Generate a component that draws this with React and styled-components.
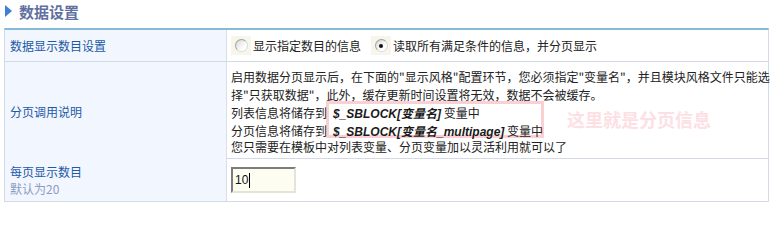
import React from "react";
import styled, { createGlobalStyle } from "styled-components";

const GlobalStyle = createGlobalStyle`
  body {
    margin: 0;
    background: #fff;
    font-family: "Noto Sans CJK SC", "Liberation Sans", sans-serif;
    font-size: 12px;
    color: #222;
  }
`;

const Page = styled.div`
  width: 775px;
  padding: 0 6px 0 4px;
  box-sizing: border-box;
`;

const Title = styled.div`
  display: flex;
  align-items: center;
  height: 22px;
  padding-left: 1px;
  gap: 7px;
  font-size: 15px;
  font-weight: bold;
  color: #6170a0;
  margin-bottom: 6px;
`;

const Arrow = styled.span`
  width: 0;
  height: 0;
  border-top: 6px solid transparent;
  border-bottom: 6px solid transparent;
  border-left: 7px solid #3f7fd6;
`;

const Table = styled.div`
  border-top: 2px solid #86bad9;
  border-left: 1px solid #d4d9e6;
  border-right: 1px solid #d4d9e6;
`;

const Row = styled.div`
  display: grid;
  grid-template-columns: 222px 1fr;
  border-bottom: 1px solid #d4d9e6;
  height: ${(p) => p.$h}px;
`;

const Label = styled.div`
  background: #f2f6fe;
  border-right: 1px solid #d9dee9;
  padding-left: 5px;
  display: flex;
  flex-direction: column;
  justify-content: center;
  color: #1c5aa8;
  line-height: 17px;
`;

const Hint = styled.span`
  color: #8d9cc2;
`;

const Cell = styled.div`
  position: relative;
  padding: ${(p) => p.$pad || "0 4px"};
  display: flex;
  flex-direction: column;
  justify-content: ${(p) => (p.$top ? "flex-start" : "center")};
`;

const RadioGroup = styled.div`
  display: flex;
  align-items: center;
`;

const RadioItem = styled.label`
  display: flex;
  align-items: center;
  margin-right: 10px;
`;

const RadioBox = styled.span`
  display: flex;
  align-items: center;
  justify-content: center;
  width: 20px;
  height: 19px;
  background: #f6f6ea;
  margin-right: 2px;
`;

const Radio = styled.span`
  width: 11px;
  height: 11px;
  border-radius: 50%;
  border: 1px solid #a2a2a2;
  border-right-color: #d8d8d8;
  border-bottom-color: #dadada;
  background: linear-gradient(135deg, #d8d8d8, #fff 70%);
  display: flex;
  align-items: center;
  justify-content: center;

  &::after {
    content: "";
    width: 4px;
    height: 4px;
    border-radius: 50%;
    background: ${(p) => (p.$checked ? "#111" : "transparent")};
  }
`;

const Line = styled.div`
  position: relative;
  white-space: nowrap;
  line-height: ${(p) => p.$lh || 18}px;
`;

const Code = styled.span`
  font-family: "Liberation Sans", "Noto Sans CJK SC", sans-serif;
  font-size: 12px;
  font-weight: bold;
  font-style: italic;
  padding-left: 6px;
  color: #1a1a1a;
`;

const Frame = styled.div`
  position: absolute;
  left: 99px;
  top: 39px;
  width: 218px;
  height: 37px;
  border: 3px solid #fbd0d4;
  box-sizing: border-box;
  pointer-events: none;
`;

const Note = styled.div`
  position: absolute;
  left: 340px;
  top: 44px;
  font-size: 18px;
  font-weight: bold;
  color: #fde0e3;
  pointer-events: none;
`;

const Input = styled.div`
  width: 65px;
  height: 26px;
  box-sizing: border-box;
  border: 2px solid;
  border-color: #7c7c7c #e4e4da #e4e4da #7c7c7c;
  background: #fdfdf1;
  display: flex;
  align-items: center;
  padding-left: 2px;
  font-family: "Liberation Sans", sans-serif;
  font-size: 12px;
  color: #111;
`;

const Caret = styled.span`
  width: 1px;
  height: 15px;
  background: #000;
  margin-left: 1px;
`;

export default function App() {
  return (
    <>
      <GlobalStyle />
      <Page>
        <Title>
          <Arrow />
          数据设置
        </Title>
        <Table>
          <Row $h={31}>
            <Label>数据显示数目设置</Label>
            <Cell>
              <RadioGroup>
                <RadioItem>
                  <RadioBox>
                    <Radio />
                  </RadioBox>
                  显示指定数目的信息
                </RadioItem>
                <RadioItem>
                  <RadioBox>
                    <Radio $checked />
                  </RadioBox>
                  读取所有满足条件的信息，并分页显示
                </RadioItem>
              </RadioGroup>
            </Cell>
          </Row>
          <Row $h={96}>
            <Label>分页调用说明</Label>
            <Cell $top $pad="6px 4px">
              <Frame />
              <Note>这里就是分页信息</Note>
              <Line>
                启用数据分页显示后，在下面的"显示风格"配置环节，您必须指定"变量名"，并且模块风格文件只能选
              </Line>
              <Line>择"只获取数据"，此外，缓存更新时间设置将无效，数据不会被缓存。</Line>
              <Line>
                列表信息将储存到<Code>$_SBLOCK[变量名]</Code> 变量中
              </Line>
              <Line $lh={16}>
                分页信息将储存到<Code>$_SBLOCK[变量名_multipage]</Code> 变量中
              </Line>
              <Line $lh={14}>您只需要在模板中对列表变量、分页变量加以灵活利用就可以了</Line>
            </Cell>
          </Row>
          <Row $h={42}>
            <Label>
              每页显示数目
              <Hint>默认为20</Hint>
            </Label>
            <Cell>
              <Input>
                10
                <Caret />
              </Input>
            </Cell>
          </Row>
        </Table>
      </Page>
    </>
  );
}
